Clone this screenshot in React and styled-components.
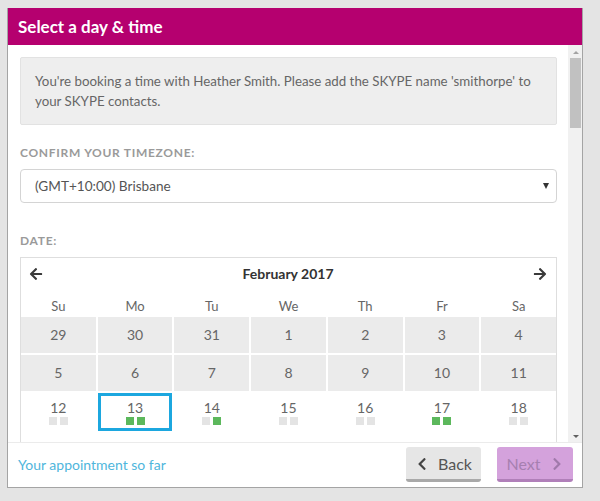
import React from "react";
import styled, { createGlobalStyle } from "styled-components";
import { FaArrowLeft, FaArrowRight, FaChevronLeft, FaChevronRight } from "react-icons/fa";

const Global = createGlobalStyle`
  html, body { background: #e4e4e4; }
  body { margin: 8px 0 0 7px; font-family: Lato, "Open Sans", sans-serif; }
  * { box-sizing: border-box; }
`;

const Panel = styled.div`
  width: 576px;
  height: 480px;
  display: flex;
  flex-direction: column;
  background: #fff;
  border: 1px solid #a4a4a4;
  border-top: none;
`;

const Header = styled.div`
  height: 37px;
  flex: none;
  background: #b5006f;
  color: #fff;
  font-weight: 700;
  font-size: 17px;
  display: flex;
  align-items: center;
  padding-left: 10px;
`;

const Body = styled.div`
  flex: 1;
  display: flex;
  min-height: 0;
`;

const Content = styled.div`
  flex: 1;
  overflow: hidden;
  padding: 12px 11px 0 12px;
`;

const Track = styled.div`
  width: 14px;
  flex: none;
  background: #f1f1f1;
  display: flex;
  flex-direction: column;
  align-items: center;
  padding: 4px 1px 2px 2px;
`;

const Arrow = styled.div`
  width: 0;
  height: 0;
  border-left: 3px solid transparent;
  border-right: 3px solid transparent;
  ${(p) => (p.$up ? "border-bottom: 3px solid #a3a3a3;" : "border-top: 3px solid #606060;")}
  margin: 2px 0;
`;

const Thumb = styled.div`
  width: 100%;
  height: 70px;
  background: #c1c1c1;
  margin-top: 2px;
`;

const Spacer = styled.div`
  flex: 1;
`;

const Info = styled.div`
  background: #eeeeee;
  border: 1px solid #e2e2e2;
  border-radius: 2px;
  padding: 13px 14px;
  color: #666;
  font-size: 13.3px;
  line-height: 20px;
`;

const Label = styled.div`
  margin-top: ${(p) => p.$top}px;
  margin-bottom: 7px;
  font-size: 12px;
  font-weight: 700;
  letter-spacing: 0.7px;
  color: #9a9a9a;
  line-height: 18px;
  text-transform: uppercase;
`;

const Select = styled.div`
  height: 34px;
  border: 1px solid #d4d4d4;
  border-radius: 4px;
  display: flex;
  align-items: center;
  justify-content: space-between;
  padding: 0 7px 0 14px;
  color: #555;
  font-size: 13.6px;
`;

const Caret = styled.div`
  width: 0;
  height: 0;
  border-left: 3.5px solid transparent;
  border-right: 3.5px solid transparent;
  border-top: 6px solid #333;
`;

const Calendar = styled.div`
  border: 1px solid #dedede;
  border-bottom: none;
`;

const CalHead = styled.div`
  height: 31px;
  display: flex;
  align-items: center;
  justify-content: space-between;
  padding: 0 9px 0 8px;
  color: #333;
  font-size: 14px;
  font-weight: 700;
`;

const NavIcon = styled.span`
  display: flex;
  color: #3a3a3a;
  font-size: 14px;
`;

const Grid = styled.div`
  display: grid;
  grid-template-columns: repeat(7, 1fr);
  column-gap: 2px;
  row-gap: 2px;
`;

const WeekDay = styled.div`
  height: 28px;
  padding-top: 6px;
  display: flex;
  align-items: center;
  justify-content: center;
  font-size: 13px;
  color: #666;
`;

const Day = styled.div`
  height: ${(p) => (p.$open ? 38 : 36)}px;
  background: ${(p) => (p.$open ? "#fff" : "#ebebeb")};
  color: #666;
  font-size: 14px;
  display: flex;
  flex-direction: column;
  align-items: center;
  justify-content: ${(p) => (p.$open ? "flex-start" : "center")};
  padding-top: ${(p) => (p.$open ? 7 : 0)}px;
  line-height: 16px;
  box-shadow: ${(p) => (p.$selected ? "inset 0 0 0 3px #1ca7df" : "none")};
`;

const Slots = styled.div`
  display: flex;
  gap: 3px;
  margin-top: 1px;
`;

const Slot = styled.div`
  width: 8px;
  height: 8px;
  background: ${(p) => (p.$free ? "#5cb85c" : "#e4e4e4")};
`;

const Footer = styled.div`
  height: 45px;
  flex: none;
  border-top: 1px solid #ebebeb;
  display: flex;
  align-items: center;
  justify-content: space-between;
  padding: 0 9px 0 10px;
`;

const Link = styled.a`
  color: #4fb6dc;
  font-size: 14px;
  text-decoration: none;
  margin-top: -2px;
`;

const Buttons = styled.div`
  display: flex;
  gap: 16px;
  margin-top: -1px;
`;

const Button = styled.div`
  width: ${(p) => (p.$next ? 76 : 75)}px;
  height: 35px;
  border-radius: 3px;
  background: ${(p) => (p.$next ? "#d4a2dc" : "#e6e6e6")};
  border-bottom: 3px solid ${(p) => (p.$next ? "#b07fb9" : "#a9a9a9")};
  color: ${(p) => (p.$next ? "#a67fb0" : "#555")};
  font-size: 16px;
  display: flex;
  align-items: center;
  justify-content: center;
  gap: 9px;
  padding-top: 1px;
`;

const BtnIcon = styled.span`
  display: flex;
  font-size: 14px;
  color: ${(p) => (p.$next ? "#a079ab" : "#444")};
`;

const weekDays = ["Su", "Mo", "Tu", "We", "Th", "Fr", "Sa"];
const past = [29, 30, 31, 1, 2, 3, 4, 5, 6, 7, 8, 9, 10, 11];
const open = [
  { d: 12, s: [0, 0] },
  { d: 13, s: [1, 1], sel: true },
  { d: 14, s: [0, 1] },
  { d: 15, s: [0, 0] },
  { d: 16, s: [0, 0] },
  { d: 17, s: [1, 1] },
  { d: 18, s: [0, 0] },
  { d: 19, s: [0, 0] },
  { d: 20, s: [0, 0] },
  { d: 21, s: [0, 0] },
  { d: 22, s: [0, 0] },
  { d: 23, s: [0, 0] },
  { d: 24, s: [0, 0] },
  { d: 25, s: [0, 0] },
];

export default function App() {
  return (
    <>
      <Global />
      <Panel>
        <Header>Select a day &amp; time</Header>
        <Body>
          <Content>
            <Info>
              You're booking a time with Heather Smith. Please add the SKYPE name 'smithorpe' to your SKYPE contacts.
            </Info>
            <Label $top={19}>Confirm your timezone:</Label>
            <Select>
              <span>(GMT+10:00) Brisbane</span>
              <Caret />
            </Select>
            <Label $top={29}>Date:</Label>
            <Calendar>
              <CalHead>
                <NavIcon><FaArrowLeft /></NavIcon>
                <span>February 2017</span>
                <NavIcon><FaArrowRight /></NavIcon>
              </CalHead>
              <Grid>
                {weekDays.map((w) => (
                  <WeekDay key={w}>{w}</WeekDay>
                ))}
              </Grid>
              <Grid>
                {past.map((d, i) => (
                  <Day key={"p" + i}>{d}</Day>
                ))}
                {open.map((o) => (
                  <Day key={o.d} $open $selected={o.sel}>
                    {o.d}
                    <Slots>
                      {o.s.map((f, i) => (
                        <Slot key={i} $free={!!f} />
                      ))}
                    </Slots>
                  </Day>
                ))}
              </Grid>
            </Calendar>
          </Content>
          <Track>
            <Arrow $up />
            <Thumb />
            <Spacer />
            <Arrow />
          </Track>
        </Body>
        <Footer>
          <Link href="#">Your appointment so far</Link>
          <Buttons>
            <Button>
              <BtnIcon><FaChevronLeft /></BtnIcon>
              Back
            </Button>
            <Button $next>
              Next
              <BtnIcon $next><FaChevronRight /></BtnIcon>
            </Button>
          </Buttons>
        </Footer>
      </Panel>
    </>
  );
}
